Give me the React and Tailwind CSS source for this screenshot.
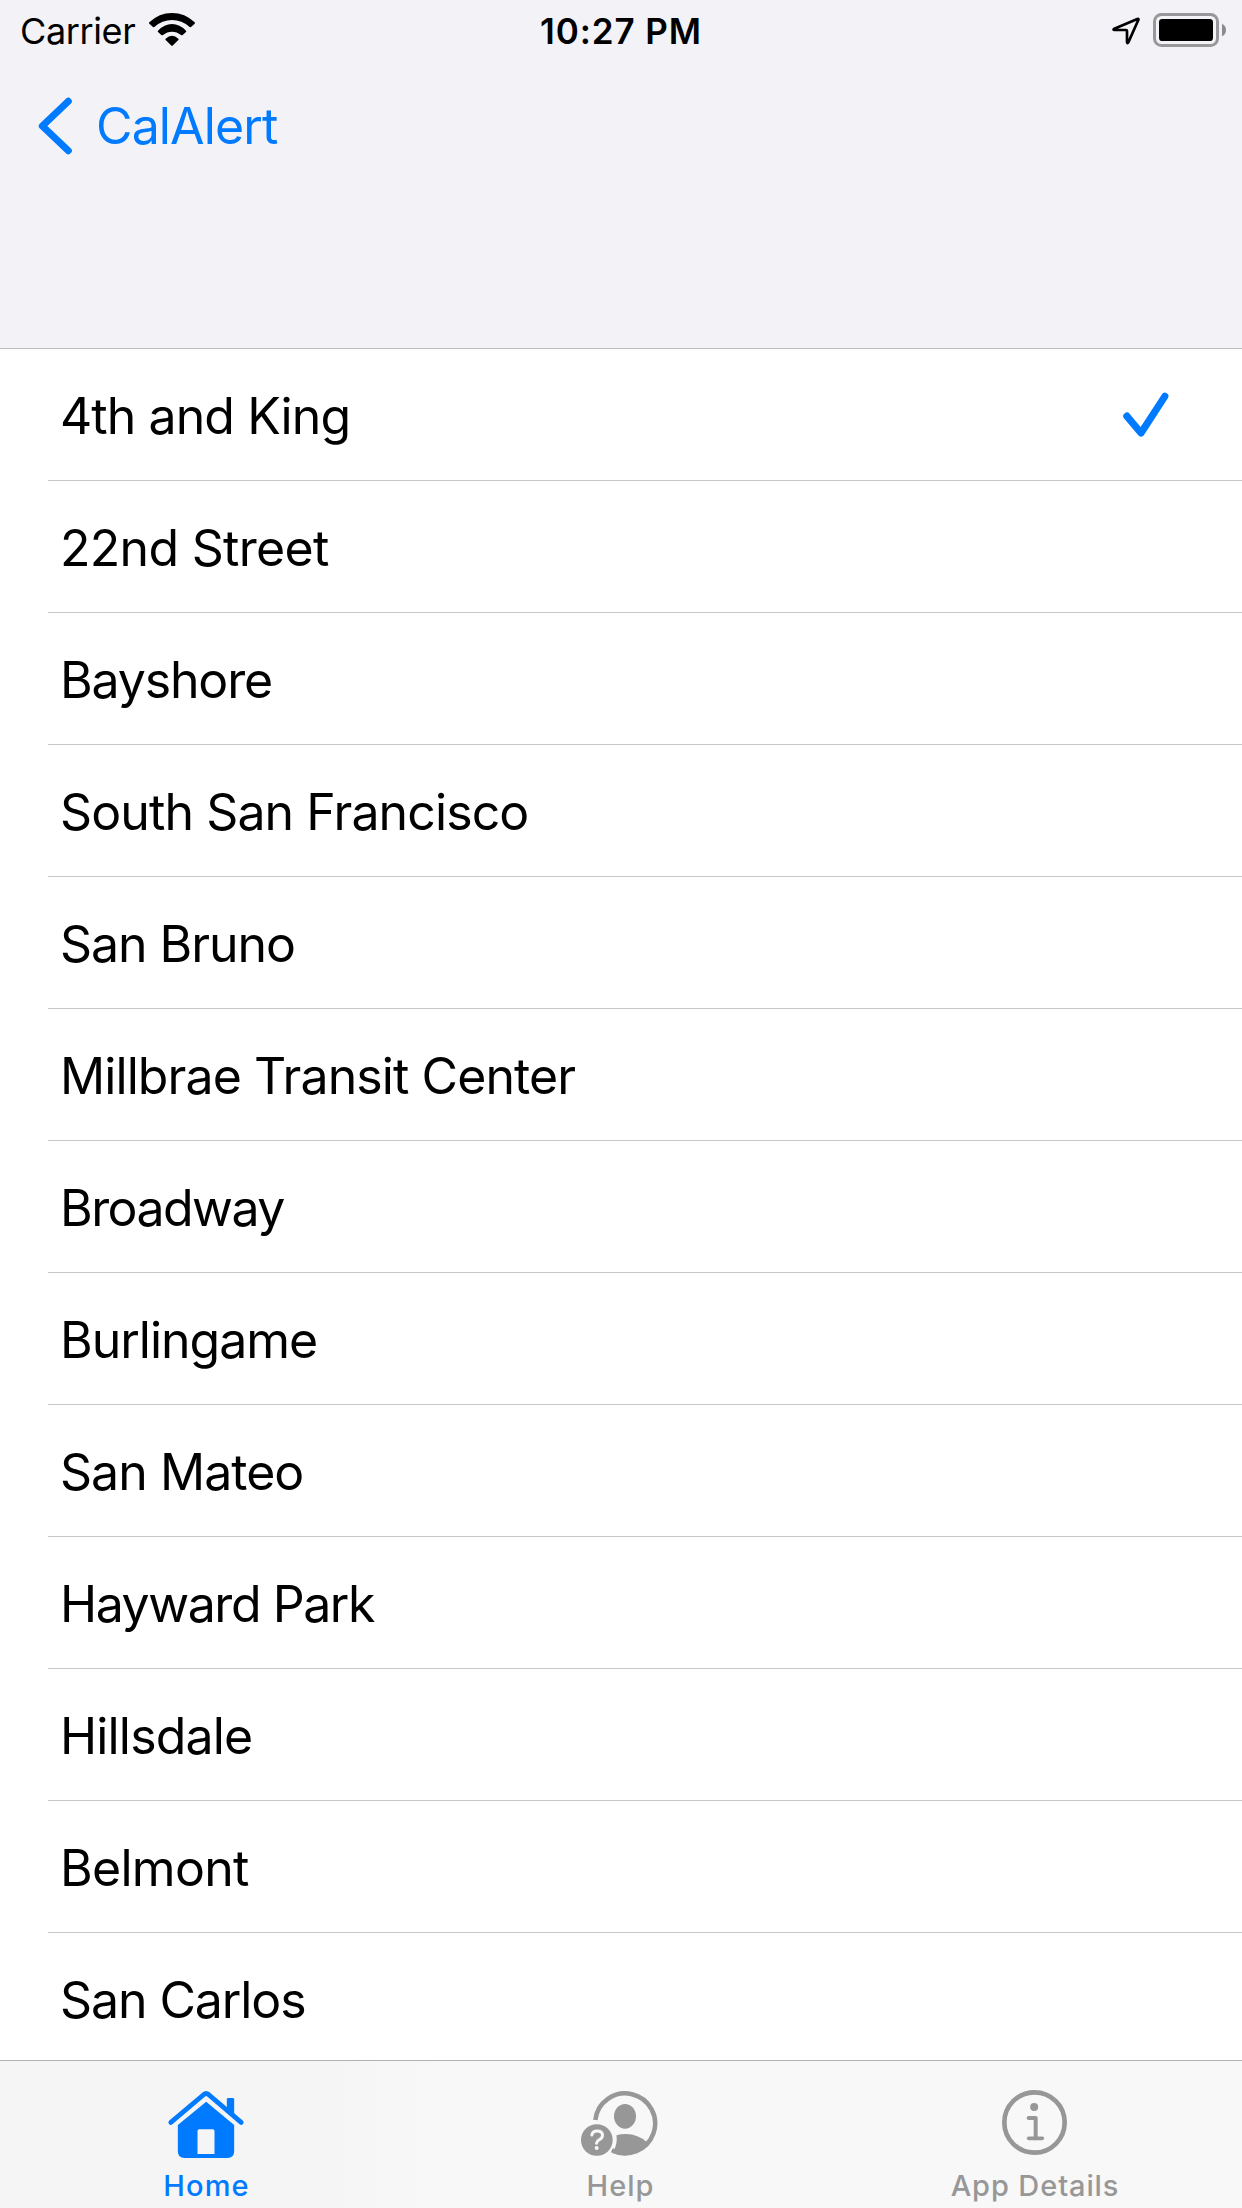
const STATIONS = [
  { name: "4th and King", tracking: "tracking-[-0.93px]", selected: true },
  { name: "22nd Street", tracking: "tracking-[-0.7px]" },
  { name: "Bayshore", tracking: "tracking-[-1.15px]" },
  { name: "South San Francisco", tracking: "tracking-[-0.9px]" },
  { name: "San Bruno", tracking: "tracking-[-1.05px]" },
  { name: "Millbrae Transit Center", tracking: "tracking-[-0.91px]" },
  { name: "Broadway", tracking: "tracking-[-1.55px]" },
  { name: "Burlingame", tracking: "tracking-[-1.02px]" },
  { name: "San Mateo", tracking: "tracking-[-0.96px]" },
  { name: "Hayward Park", tracking: "tracking-[-1.45px]" },
  { name: "Hillsdale", tracking: "tracking-[-0.84px]" },
  { name: "Belmont", tracking: "tracking-[-0.7px]" },
  { name: "San Carlos", tracking: "tracking-[-1.09px]" },
];

function WifiIcon() {
  return (
    <svg className="h-[34px] w-[48px]" viewBox="444 36 144 102" fill="currentColor">
      <path d="M448 67Q446 69 448 71L459 81Q461 83 464 80.500Q486 60 516 60T568 80.500Q571 83 573 81L584 71Q586 69 584 67Q555 39 516 39T448 67Z" />
      <path d="M474 92Q472 94 474 96L484 105Q487 107 489 105Q501 95 516 95T543 105Q545 107 548 105L558 96Q560 94 558 92Q539 72 516 72T474 92Z" />
      <path d="M497 116Q495 118 497 120L513 136Q516 139 519 136L535 120Q537 118 535 116Q526 107 516 107T497 116Z" />
    </svg>
  );
}

function LocationIcon() {
  return (
    <svg className="h-[30px] w-[30px]" viewBox="64 47 90 90" fill="none" stroke="currentColor" strokeWidth="8" strokeLinejoin="round">
      <path d="M74 85L143 56Q148 54 146 59L116 126Q113 131 112 126V92Q112 89 109 89L74 89Q69 88 74 85Z" />
    </svg>
  );
}

function BatteryIcon() {
  return (
    <svg className="h-[34px] w-[73px]" viewBox="189 39 219 102">
      <rect x="193.500" y="43.500" width="189" height="93" rx="21" fill="none" stroke="#98989b" strokeWidth="9" />
      <rect x="207" y="57" width="162" height="66" rx="10" fill="#000" />
      <path d="M396 71Q408 77 408 90T396 109Z" fill="#8b8b8e" />
    </svg>
  );
}

function ChevronIcon() {
  return (
    <svg className="h-[58px] w-[36px]" viewBox="114 290 108 174" fill="none" stroke="currentColor" strokeWidth="21" strokeLinecap="round" strokeLinejoin="round">
      <path d="M205 303L127 377L205 451" />
    </svg>
  );
}

function CheckIcon() {
  return (
    <svg className="h-[48px] w-[48px]" viewBox="95 64 144 144" fill="none" stroke="currentColor" strokeWidth="21.500" strokeLinecap="round" strokeLinejoin="round">
      <path d="M109.500 139.500L152 190L223.500 80" />
    </svg>
  );
}

function HomeIcon() {
  return (
    <svg className="h-[70px] w-[80px]" viewBox="109.500 117 240 210" fill="currentColor">
      <path d="M289 180V148Q289 144 293 144H307Q311 144 311 148V198Z" />
      <path d="M121 217L220 133.500Q227 128 234 133.500L332 217" fill="none" stroke="currentColor" strokeWidth="14.500" strokeLinecap="round" strokeLinejoin="round" />
      <path fillRule="evenodd" d="M227 155L311 225V304Q311 324 291 324H162Q142 324 142 304V225ZM206 238Q201 238 201 243V312H252V243Q252 238 247 238Z" />
    </svg>
  );
}

function HelpIcon() {
  return (
    <svg className="h-[70px] w-[80px]" viewBox="121.500 117 240 210" fill="currentColor">
      <path d="M164.500 210A90 90 0 1 1 214 301" fill="none" stroke="currentColor" strokeWidth="13.500" />
      <ellipse cx="253.500" cy="199" rx="33" ry="37" />
      <path d="M228 256Q241 252 256 252Q294 253 318 276Q292 316 254 316Q233 316 216 309Q232 284 228 256Z" />
      <circle cx="169" cy="270" r="47.500" />
      <path d="M154 255Q156 243 170 243Q186 243 186 256Q186 264 177 269Q169 273 168 280" fill="none" stroke="#f8f8f8" strokeWidth="9" strokeLinecap="round" strokeLinejoin="round" />
      <circle cx="168.500" cy="294" r="6" fill="#f8f8f8" />
    </svg>
  );
}

function InfoIcon() {
  return (
    <svg className="h-[70px] w-[80px]" viewBox="195 117 240 210" fill="none" stroke="currentColor">
      <circle cx="313.500" cy="217.500" r="90.500" strokeWidth="14" />
      <circle cx="312.500" cy="171" r="12" fill="currentColor" stroke="none" />
      <path d="M296 204H317V265" strokeWidth="12" strokeLinecap="round" strokeLinejoin="round" />
      <path d="M296 265H337" strokeWidth="11" strokeLinecap="round" />
    </svg>
  );
}

function Tab({ icon, label, className }) {
  return (
    <button type="button" className={`flex flex-col items-center pt-7 text-[29px] leading-9 font-medium ${className}`}>
      {icon}
      <span className="mt-[9px]">{label}</span>
    </button>
  );
}

export default function App() {
  return (
    <div className="flex h-[2208px] w-[1242px] flex-col overflow-hidden bg-white font-['Inter','Liberation_Sans',sans-serif] text-black">
      <header className="h-[349px] shrink-0 border-b border-[#bcbcc0] bg-[#f2f2f7]">
        <div className="grid h-[62px] grid-cols-3 items-center">
          <div className="flex items-center pl-5">
            <span className="text-[36px] leading-none tracking-[-0.37px]">Carrier</span>
            <span className="-mt-[4px] ml-[13px]"><WifiIcon /></span>
          </div>
          <span className="text-center text-[35px] leading-none font-[560] tracking-[0.9px]">10:27 PM</span>
          <div className="flex items-center justify-end gap-[12px] pr-4">
            <LocationIcon />
            <span className="-mt-[2px]"><BatteryIcon /></span>
          </div>
        </div>
        <button type="button" className="flex h-[128px] items-center pl-[38px] text-[#007aff]">
          <ChevronIcon />
          <span className="ml-[22px] text-[50px] leading-none tracking-[-0.87px]">CalAlert</span>
        </button>
      </header>

      <ul className="min-h-0 flex-1 overflow-hidden pl-12">
        {STATIONS.map((s) => (
          <li key={s.name} className="flex h-[132px] items-center justify-between border-b border-[#c6c6c8] pr-[72px] pl-3 text-[50px] leading-none">
            <span className={`pt-[3px] ${s.tracking}`}>{s.name}</span>
            {s.selected && <span className="text-[#007aff]"><CheckIcon /></span>}
          </li>
        ))}
      </ul>

      <nav className="grid h-[148px] shrink-0 grid-cols-[412px_417px_412px] border-t border-[#b2b2b2] bg-linear-to-r from-[#f5f5f5] from-25% to-[#f8f8f8] to-35%">
        <Tab icon={<HomeIcon />} label="Home" className="pl-px tracking-[1.2px] text-[#007aff]" />
        <Tab icon={<HelpIcon />} label="Help" className="tracking-[1px] text-[#979797]" />
        <Tab icon={<InfoIcon />} label="App Details" className="tracking-[0.9px] text-[#979797]" />
      </nav>
    </div>
  );
}
